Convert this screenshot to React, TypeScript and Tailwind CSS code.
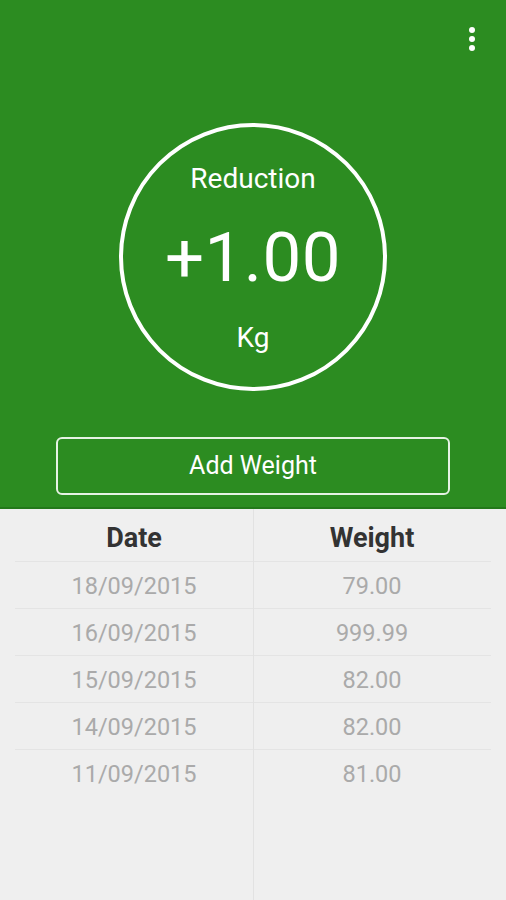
const rows = [
  { date: "18/09/2015", weight: "79.00" },
  { date: "16/09/2015", weight: "999.99" },
  { date: "15/09/2015", weight: "82.00" },
  { date: "14/09/2015", weight: "82.00" },
  { date: "11/09/2015", weight: "81.00" },
];

function MenuDots() {
  return (
    <svg width="12" height="26" viewBox="0 0 12 26" className="absolute right-[28px] top-[26px]">
      <circle cx="6" cy="4" r="3" fill="#fff" />
      <circle cx="6" cy="13" r="3" fill="#fff" />
      <circle cx="6" cy="22" r="3" fill="#fff" />
    </svg>
  );
}

export default function App() {
  return (
    <div
      className="w-[506px] h-[900px] flex flex-col bg-[#efefef] overflow-hidden"
      style={{ fontFamily: "Roboto, 'Liberation Sans', sans-serif" }}
    >
      <div className="relative h-[509px] bg-[#2c8c21] border-b-2 border-[#23781a] flex flex-col items-center">
        <MenuDots />
        <div className="mt-[123px] w-[268px] h-[268px] rounded-full border-[4px] border-white flex flex-col items-center text-white">
          <div className="mt-[34px] text-[28px] leading-[36px]">Reduction</div>
          <div className="mt-[19px] text-[69px] leading-[84px] tracking-[0.5px]">+1.00</div>
          <div className="mt-[20px] text-[28px] leading-[36px]">Kg</div>
        </div>
        <div className="mt-[46px] w-[394px] h-[58px] rounded-[6px] border-2 border-[#e6f2e4] flex items-center justify-center text-white text-[25px]">
          Add Weight
        </div>
      </div>
      <div className="relative flex-1 px-[15px]">
        <div className="absolute left-[253px] top-0 bottom-0 w-px bg-[#e2e2e2]" />
        <div className="grid grid-cols-2 h-[52px] pt-[6px] items-center text-[27px] font-bold text-[#333]">
          <div className="text-center">Date</div>
          <div className="text-center">Weight</div>
        </div>
        {rows.map((r, i) => (
          <div
            key={i}
            className="grid grid-cols-2 h-[47px] pt-[4px] items-center border-t border-[#e4e4e4] text-[23.5px] text-[#aaaaaa]"
          >
            <div className="text-center">{r.date}</div>
            <div className="text-center">{r.weight}</div>
          </div>
        ))}
      </div>
    </div>
  );
}
